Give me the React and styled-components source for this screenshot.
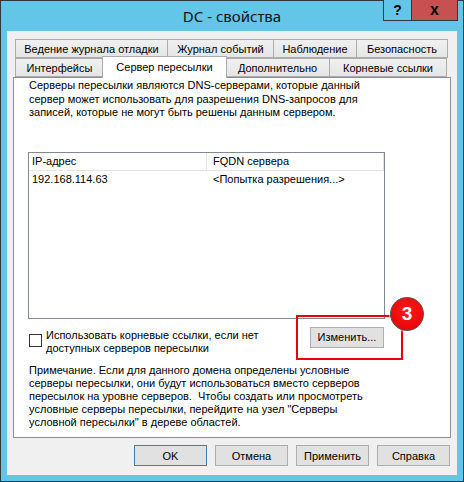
import React from "react";
import styled, { createGlobalStyle } from "styled-components";

const GlobalStyle = createGlobalStyle`
  html, body {
    margin: 0;
    padding: 0;
    background: #ffffff;
  }
  * {
    box-sizing: border-box;
  }
`;

const Window = styled.div`
  width: 464px;
  height: 482px;
  border: 1px solid #2b3940;
  background: #63c6e8;
  display: flex;
  flex-direction: column;
  font-family: "Liberation Sans", Arial, sans-serif;
  font-size: 11px;
  color: #000;
`;

const TitleBar = styled.div`
  height: 30px;
  display: grid;
  grid-template-columns: 1fr auto 1fr;
  align-items: start;
`;

const Title = styled.div`
  grid-column: 2;
  font-family: "Noto Sans", "Open Sans", sans-serif;
  font-size: 15px;
  line-height: 30px;
  color: #111;
`;

const Caption = styled.div`
  grid-column: 3;
  justify-self: end;
  display: flex;
  margin-right: 5px;
  margin-top: -1px;
`;

const CaptionButton = styled.div`
  width: ${(p) => p.$w}px;
  height: 21px;
  border: 1px solid #2a3a42;
  border-top: none;
  margin-left: -1px;
  background: ${(p) => (p.$close ? "#c75050" : "#63c6e8")};
  display: flex;
  align-items: center;
  justify-content: center;
  font-family: "Liberation Sans", Arial, sans-serif;
  font-weight: bold;
  font-size: ${(p) => (p.$close ? 16 : 14)}px;
  color: #000;
`;

const Frame = styled.div`
  flex: 1;
  padding: 0 6px 6px 6px;
  display: flex;
`;

const Client = styled.div`
  flex: 1;
  background: #f0f0f0;
  padding: 9px 6px 0 6px;
  display: flex;
  flex-direction: column;
`;

const TabRow = styled.div`
  display: flex;
  align-items: flex-end;
  height: ${(p) => p.$h}px;
  padding-left: 2px;
`;

const Tab = styled.div`
  position: relative;
  width: ${(p) => p.$w}px;
  height: ${(p) => (p.$active ? 22 : p.$h)}px;
  margin-right: ${(p) => (p.$active ? -2 : -1)}px;
  margin-left: ${(p) => (p.$active ? -1 : 0)}px;
  margin-bottom: ${(p) => (p.$active ? -1 : 0)}px;
  z-index: ${(p) => (p.$active ? 2 : 0)};
  border: 1px solid #acacac;
  border-bottom: ${(p) => (p.$active ? "none" : "1px solid #acacac")};
  background: ${(p) =>
    p.$active ? "#ffffff" : "linear-gradient(#f0f0f0, #e5e5e5)"};
  display: flex;
  align-items: center;
  justify-content: center;
  padding-bottom: ${(p) => (p.$active ? 2 : 0)}px;
  white-space: nowrap;
`;

const Panel = styled.div`
  position: relative;
  z-index: 1;
  height: 361px;
  background: #ffffff;
  border: 1px solid #8c8f96;
  padding: 1px 15px 0 15px;
  display: flex;
  flex-direction: column;
`;

const Paragraph = styled.div`
  line-height: ${(p) => p.$lh || 13.5}px;
  white-space: nowrap;
  margin-top: ${(p) => p.$mt || 0}px;
`;

const List = styled.div`
  margin-top: 32px;
  margin-left: -1px;
  width: 357px;
  height: 167px;
  border: 1px solid #828790;
  display: flex;
  flex-direction: column;
`;

const ListHeader = styled.div`
  display: grid;
  grid-template-columns: 178px 1fr;
  height: 18px;
  border-bottom: 1px solid #e5e5e5;
`;

const HeaderCell = styled.div`
  padding-left: ${(p) => p.$pl}px;
  line-height: 17px;
  border-right: 1px solid #e5e5e5;
`;

const ListRow = styled.div`
  display: grid;
  grid-template-columns: 178px 1fr;
  height: 16px;
  line-height: 16px;
`;

const Cell = styled.div`
  padding-left: ${(p) => p.$pl}px;
`;

const OptionRow = styled.div`
  display: flex;
  align-items: flex-start;
  justify-content: space-between;
  margin-top: 8px;
  width: 355px;
`;

const CheckLabel = styled.label`
  display: flex;
  align-items: flex-start;
  gap: 4px;
  margin-top: 2px;
`;

const CheckBox = styled.span`
  width: 13px;
  height: 13px;
  margin-top: 5px;
  border: 1px solid #333333;
  background: #ffffff;
  flex-shrink: 0;
`;

const Highlight = styled.div`
  position: relative;
`;

const Button = styled.button`
  width: ${(p) => p.$w || 73}px;
  height: 21px;
  padding: 0;
  background: #e1e1e1;
  border: 1px solid ${(p) => (p.$default ? "#3c7fb1" : "#adadad")};
  font-family: "Liberation Sans", Arial, sans-serif;
  font-size: 11px;
  color: #000;
`;

const RedFrame = styled.div`
  position: absolute;
  left: -14px;
  top: -12px;
  width: 107px;
  height: 45px;
  border: 2px solid #e8000b;
  pointer-events: none;
`;

const Badge = styled.div`
  position: absolute;
  left: 80px;
  top: -30px;
  width: 34px;
  height: 34px;
  border-radius: 50%;
  background: radial-gradient(circle at 50% 40%, #ff1a1a, #e00000);
  border: 1.5px solid #555;
  box-shadow: 0 0 0 1px rgba(255, 255, 255, 0.6);
  display: flex;
  align-items: center;
  justify-content: center;
  color: #ffffff;
  font-family: "Liberation Sans", Arial, sans-serif;
  font-weight: bold;
  font-size: 19px;
`;

const Footer = styled.div`
  display: flex;
  justify-content: flex-end;
  gap: 8px;
  padding-top: 7px;
  padding-right: 1px;
`;

const topTabs = [
  { label: "Ведение журнала отладки", w: 153 },
  { label: "Журнал событий", w: 107 },
  { label: "Наблюдение", w: 84 },
  { label: "Безопасность", w: 92 },
];

const bottomTabs = [
  { label: "Интерфейсы", w: 89 },
  { label: "Сервер пересылки", w: 125, active: true },
  { label: "Дополнительно", w: 105 },
  { label: "Корневые ссылки", w: 118 },
];

export default function App() {
  return (
    <>
      <GlobalStyle />
      <Window>
        <TitleBar>
          <Title>DC - свойства</Title>
          <Caption>
            <CaptionButton $w={29}>?</CaptionButton>
            <CaptionButton $w={47} $close>
              x
            </CaptionButton>
          </Caption>
        </TitleBar>
        <Frame>
          <Client>
            <TabRow $h={18}>
              {topTabs.map((t) => (
                <Tab key={t.label} $w={t.w} $h={19}>
                  {t.label}
                </Tab>
              ))}
            </TabRow>
            <TabRow $h={19}>
              {bottomTabs.map((t) => (
                <Tab key={t.label} $w={t.w} $h={19} $active={t.active}>
                  {t.label}
                </Tab>
              ))}
            </TabRow>
            <Panel>
              <Paragraph>
                Серверы пересылки являются DNS-серверами, которые данный
                <br />
                сервер может использовать для разрешения DNS-запросов для
                <br />
                записей, которые не могут быть решены данным сервером.
              </Paragraph>
              <List>
                <ListHeader>
                  <HeaderCell $pl={3}>IP-адрес</HeaderCell>
                  <HeaderCell $pl={6}>FQDN сервера</HeaderCell>
                </ListHeader>
                <ListRow>
                  <Cell $pl={3}>192.168.114.63</Cell>
                  <Cell $pl={6}>&lt;Попытка разрешения...&gt;</Cell>
                </ListRow>
              </List>
              <OptionRow>
                <CheckLabel>
                  <CheckBox />
                  <Paragraph $lh={13}>
                    Использовать корневые ссылки, если нет
                    <br />
                    доступных серверов пересылки
                  </Paragraph>
                </CheckLabel>
                <Highlight>
                  <Button $w={74}>Изменить...</Button>
                  <RedFrame />
                  <Badge>3</Badge>
                </Highlight>
              </OptionRow>
              <Paragraph $lh={13} $mt={9}>
                Примечание. Если для данного домена определены условные
                <br />
                серверы пересылки, они будут использоваться вместо серверов
                <br />
                пересылок на уровне серверов.&nbsp; Чтобы создать или просмотреть
                <br />
                условные серверы пересылки, перейдите на узел "Серверы
                <br />
                условной пересылки" в дереве областей.
              </Paragraph>
            </Panel>
            <Footer>
              <Button $default>OK</Button>
              <Button>Отмена</Button>
              <Button>Применить</Button>
              <Button>Справка</Button>
            </Footer>
          </Client>
        </Frame>
      </Window>
    </>
  );
}
